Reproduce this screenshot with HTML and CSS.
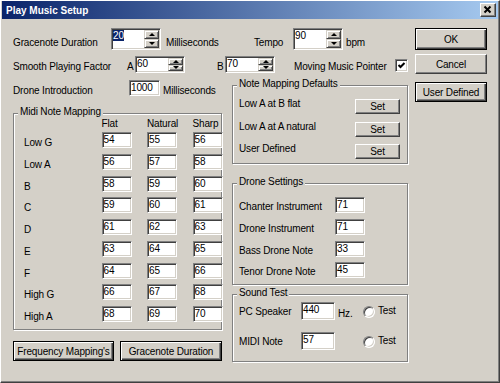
FILE: index.html
```html
<!DOCTYPE html>
<html lang="en">
<head>
  <meta charset="UTF-8">
  <meta name="viewport" content="width=device-width, initial-scale=1.0">
  <title>Play Music Setup</title>
  <link rel="stylesheet" href="styles.css">
</head>
<body>
  <div class="window">
    <div class="titlebar">
      <span class="title">Play Music Setup</span>
      <button class="close" aria-label="Close">
        <svg width="14" height="12" viewBox="0 0 14 12"><path d="M3.5 2.5 L9.5 8.5 M9.5 2.5 L3.5 8.5" stroke="#000" stroke-width="2" fill="none"/></svg>
      </button>
    </div>

    <div class="client">
      <div class="main">
        <!-- top settings -->
        <div class="row row-1">
          <span class="txt w-grace">Gracenote Duration</span>
          <div class="edit spin spin-big">
            <span class="val"><span class="sel">20</span></span>
            <span class="spin-btns"><span class="arrow up"></span><span class="arrow down"></span></span>
          </div>
          <span class="txt w-ms">Milliseconds</span>
          <span class="txt w-tempo">Tempo</span>
          <div class="edit spin spin-big">
            <span class="val">90</span>
            <span class="spin-btns"><span class="arrow up"></span><span class="arrow down"></span></span>
          </div>
          <span class="txt unit">bpm</span>
        </div>

        <div class="row row-2">
          <span class="txt w-smooth">Smooth Playing Factor</span>
          <span class="txt w-ab">A</span>
          <div class="edit spin spin-small">
            <span class="val">60</span>
            <span class="spin-btns"><span class="arrow up"></span><span class="arrow down"></span></span>
          </div>
          <span class="txt w-ab gap-b">B</span>
          <div class="edit spin spin-small">
            <span class="val">70</span>
            <span class="spin-btns"><span class="arrow up"></span><span class="arrow down"></span></span>
          </div>
          <span class="txt w-pointer">Moving Music Pointer</span>
          <span class="check">
            <svg width="9" height="9" viewBox="0 0 9 9"><path d="M1.5 4 L3.5 6 L7.5 2" stroke="#000" stroke-width="2" fill="none"/></svg>
          </span>
        </div>

        <div class="lower">
          <div class="col-left">
            <div class="row row-3">
              <span class="txt w-drone">Drone Introduction</span>
              <div class="edit w-intro">1000</div>
              <span class="txt ms-3">Milliseconds</span>
            </div>

            <div class="group midi">
              <div class="group-title">Midi Note Mapping</div>
              <div class="note-grid note-head">
                <span></span><span>Flat</span><span>Natural</span><span>Sharp</span>
              </div>
              <div class="note-grid note-rows">
                <span class="note">Low G</span><div class="edit">54</div><div class="edit">55</div><div class="edit">56</div>
                <span class="note">Low A</span><div class="edit">56</div><div class="edit">57</div><div class="edit">58</div>
                <span class="note">B</span><div class="edit">58</div><div class="edit">59</div><div class="edit">60</div>
                <span class="note">C</span><div class="edit">59</div><div class="edit">60</div><div class="edit">61</div>
                <span class="note">D</span><div class="edit">61</div><div class="edit">62</div><div class="edit">63</div>
                <span class="note">E</span><div class="edit">63</div><div class="edit">64</div><div class="edit">65</div>
                <span class="note">F</span><div class="edit">64</div><div class="edit">65</div><div class="edit">66</div>
                <span class="note">High G</span><div class="edit">66</div><div class="edit">67</div><div class="edit">68</div>
                <span class="note">High A</span><div class="edit">68</div><div class="edit">69</div><div class="edit">70</div>
              </div>
            </div>

            <div class="bottom-btns">
              <button class="btn framed w-freq">Frequency Mapping's</button>
              <button class="btn framed w-gdur">Gracenote Duration</button>
            </div>
          </div>

          <div class="col-right">
            <div class="group defaults">
              <div class="group-title">Note Mapping Defaults</div>
              <div class="set-list">
                <div class="set-row"><span class="set-lbl">Low A at B flat</span><button class="btn set">Set</button></div>
                <div class="set-row"><span class="set-lbl">Low A at A natural</span><button class="btn set">Set</button></div>
                <div class="set-row"><span class="set-lbl">User Defined</span><button class="btn set">Set</button></div>
              </div>
            </div>

            <div class="group drone">
              <div class="group-title">Drone Settings</div>
              <div class="drone-list">
                <div class="drone-row"><span class="drone-lbl">Chanter Instrument</span><div class="edit w-drone-edit">71</div></div>
                <div class="drone-row"><span class="drone-lbl">Drone Instrument</span><div class="edit w-drone-edit">71</div></div>
                <div class="drone-row"><span class="drone-lbl">Bass Drone Note</span><div class="edit w-drone-edit">33</div></div>
                <div class="drone-row"><span class="drone-lbl">Tenor Drone Note</span><div class="edit w-drone-edit">45</div></div>
              </div>
            </div>

            <div class="group sound">
              <div class="group-title">Sound Test</div>
              <div class="sound-row first">
                <span class="sound-lbl">PC Speaker</span>
                <div class="edit w-sound">440</div>
                <span class="hz">Hz.</span>
                <span class="radio"></span>
                <span class="test">Test</span>
              </div>
              <div class="sound-row">
                <span class="sound-lbl">MIDI Note</span>
                <div class="edit w-sound">57</div>
                <span class="hz"></span>
                <span class="radio"></span>
                <span class="test">Test</span>
              </div>
            </div>
          </div>
        </div>
      </div>

      <div class="side">
        <button class="btn framed side-ok">OK</button>
        <button class="btn side-cancel">Cancel</button>
        <button class="btn framed side-user">User Defined</button>
      </div>
    </div>
  </div>
</body>
</html>
```

FILE: styles.css
```css
* {
  box-sizing: border-box;
}
body {
  margin: 0;
  background-color: #d4d0c8;
  font-family: "Liberation Sans", Arial, sans-serif;
  font-size: 10px;
  letter-spacing: -0.15px;
  color: #000;
}
.window {
  width: 500px;
  height: 383px;
  border: 1px solid;
  border-color: #fff #404040 #404040 #fff;
  box-shadow: inset -1px -1px #808080;
}

/* title bar */
.titlebar {
  display: flex;
  align-items: center;
  justify-content: space-between;
  height: 18px;
  margin: 0 1px;
  padding: 0 2px;
  background: linear-gradient(to right, #0a246a, #a6caf0);
}
.title {
  padding: 2px 0 0 2px;
  line-height: 16px;
  color: #fff;
  font-weight: bold;
  letter-spacing: 0;
}
.close {
  display: flex;
  align-items: center;
  justify-content: center;
  width: 16px;
  height: 14px;
  padding: 0;
  background: #d4d0c8;
  border: 1px solid;
  border-color: #fff #404040 #404040 #fff;
  box-shadow: inset -1px -1px #808080;
}

/* layout */
.client {
  display: flex;
}
.main {
  width: 407px;
  padding: 9px 0 0 12px;
}
.side {
  display: flex;
  flex-direction: column;
  width: 72px;
  margin-left: 7px;
  padding-top: 9px;
}
.row {
  display: flex;
  align-items: flex-start;
}
.txt {
  line-height: 12px;
  white-space: nowrap;
}
.row-1 {
  height: 22px;
}
.row-1 .txt {
  padding-top: 9px;
}
.row-2 {
  height: 17px;
  margin-top: 6px;
}
.row-2 .txt {
  padding-top: 5px;
}
.row-3 {
  height: 22px;
  margin-top: 1px;
}
.row-3 .txt {
  padding-top: 5px;
}
.w-grace { width: 98px; }
.w-ms { width: 88px; margin-left: 5px; }
.w-tempo { width: 39px; }
.unit { margin-left: 3px; }
.w-smooth { width: 114px; }
.w-ab { width: 8px; }
.gap-b { margin-left: 32px; }
.w-pointer { width: 101px; margin-left: 19px; }
.w-drone { width: 116px; }
.w-intro { width: 31px; height: 22px; }
.ms-3 { margin-left: 3px; }

.lower {
  display: flex;
  margin-top: 6px;
}
.col-left {
  width: 209px;
}
.col-right {
  width: 176px;
  margin-left: 10px;
}

/* sunken edit boxes */
.edit {
  height: 16px;
  padding: 1px 1px 0;
  line-height: 12px;
  background: #fff;
  border: 1px solid;
  border-color: #808080 #fff #fff #808080;
  box-shadow: inset 1px 1px #404040, inset -1px -1px #d4d0c8;
  white-space: nowrap;
}
.spin {
  display: flex;
  width: 50px;
  padding: 0;
}
.spin-big { height: 22px; }
.spin-small { height: 17px; }
.spin .val {
  flex: 1;
  padding: 1px 0 0 1px;
}
.sel {
  background: #0a246a;
  color: #fff;
}
.spin-btns {
  display: flex;
  flex-direction: column;
  width: 15px;
  margin: 1px 1px 1px 0;
}
.arrow {
  flex: 1;
  display: flex;
  align-items: center;
  justify-content: center;
  background: #d4d0c8;
  border: 1px solid;
  border-color: #d4d0c8 #404040 #404040 #d4d0c8;
  box-shadow: inset 1px 1px #fff, inset -1px -1px #808080;
}
.arrow::after {
  content: "";
  border-left: 3px solid transparent;
  border-right: 3px solid transparent;
}
.up::after {
  border-bottom: 3px solid #000;
}
.down::after {
  border-top: 3px solid #000;
}
.check {
  display: flex;
  align-items: center;
  justify-content: center;
  width: 13px;
  height: 13px;
  margin-top: 3px;
  background: #fff;
  border: 1px solid;
  border-color: #808080 #fff #fff #808080;
  box-shadow: inset 1px 1px #404040, inset -1px -1px #d4d0c8;
}

/* group boxes */
.group {
  padding-left: 4px;
  border: 1px solid #808080;
  box-shadow: inset 1px 1px #fff, 1px 1px #fff;
}
.group-title {
  width: max-content;
  margin-top: -8px;
  padding: 0 2px;
  line-height: 12px;
  background: #d4d0c8;
}
.midi {
  margin-top: 11px;
  padding-bottom: 7px;
}
.note-grid {
  display: grid;
  grid-template-columns: 62px 30px 30px 30px;
  column-gap: 15.5px;
  margin-left: 6px;
}
.note-head {
  margin-top: 1px;
  line-height: 10px;
}
.note-rows {
  grid-template-rows: repeat(9, 16px);
  row-gap: 5.75px;
  margin-top: 3px;
}
.note {
  line-height: 21px;
  white-space: nowrap;
}
.bottom-btns {
  display: flex;
  gap: 6px;
  margin-top: 11px;
}

/* buttons */
.btn {
  display: flex;
  align-items: center;
  justify-content: center;
  padding: 0;
  font: inherit;
  letter-spacing: inherit;
  color: #000;
  background: #d4d0c8;
  border: 1px solid;
  border-color: #fff #404040 #404040 #fff;
  box-shadow: inset -1px -1px #808080;
  white-space: nowrap;
}
.btn.framed {
  border-color: #000;
  box-shadow: inset 1px 1px #fff, inset -1px -1px #404040, inset -2px -2px #808080;
}
.w-freq { width: 101px; height: 20px; }
.w-gdur { width: 102px; height: 20px; }
.side-ok { height: 22px; }
.side-cancel { height: 20px; margin-top: 4px; }
.side-user { height: 20px; margin-top: 8px; }

/* note mapping defaults */
.defaults {
  margin-top: 6px;
  padding-bottom: 4px;
}
.set-list {
  display: flex;
  flex-direction: column;
  gap: 7.5px;
  margin-top: 9px;
  padding: 0 7px 0 2px;
}
.set-row {
  display: flex;
  align-items: flex-start;
  justify-content: space-between;
}
.set-lbl {
  line-height: 10px;
}
.btn.set {
  width: 45px;
  height: 15px;
}

/* drone settings */
.drone {
  margin-top: 19px;
  padding-bottom: 6px;
}
.drone-list {
  display: flex;
  flex-direction: column;
  gap: 5.75px;
  margin: 9px 0 0 2px;
}
.drone-row {
  display: flex;
  align-items: flex-start;
  height: 16px;
}
.drone-lbl {
  width: 96px;
  line-height: 19px;
  white-space: nowrap;
}
.w-drone-edit { width: 30px; }

/* sound test */
.sound {
  margin-top: 9px;
  padding-bottom: 11px;
}
.sound-row {
  display: flex;
  align-items: flex-start;
  height: 18px;
  margin: 12px 0 0 2px;
}
.sound-row.first {
  margin-top: 3px;
}
.sound-lbl {
  width: 62px;
  padding-top: 1px;
  line-height: 18px;
}
.w-sound {
  width: 34px;
  height: 18px;
}
.hz {
  width: 28px;
  padding: 3px 0 0 3px;
  line-height: 18px;
}
.radio {
  width: 12px;
  height: 12px;
  margin-top: 4px;
  border-radius: 50%;
  background: #fff;
  border: 1px solid;
  border-color: #808080 #fff #fff #808080;
  box-shadow: inset 1px 1px #404040, inset -1px -1px #d4d0c8;
}
.test {
  margin-left: 3px;
  line-height: 18px;
}
```
